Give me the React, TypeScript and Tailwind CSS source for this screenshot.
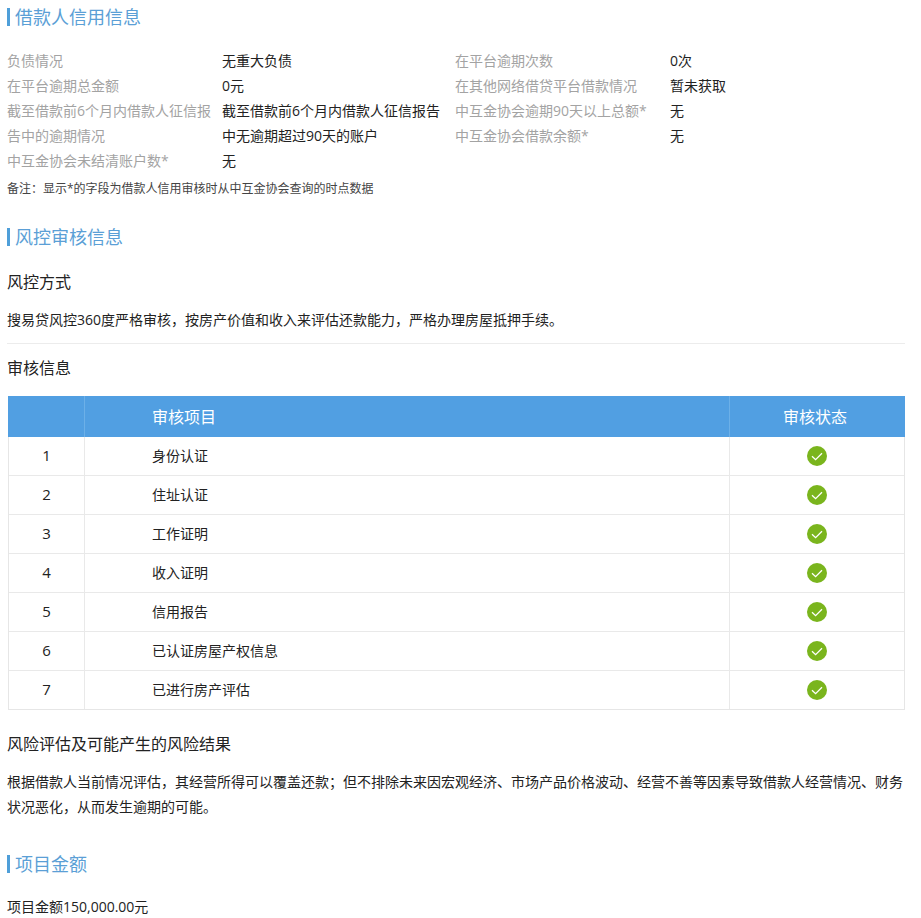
const font = { fontFamily: '"Open Sans", "Noto Sans CJK SC", sans-serif' };

const infoRows = [
  ["负债情况", "无重大负债", "在平台逾期次数", "0次"],
  ["在平台逾期总金额", "0元", "在其他网络借贷平台借款情况", "暂未获取"],
  ["截至借款前6个月内借款人征信报", "截至借款前6个月内借款人征信报告", "中互金协会逾期90天以上总额*", "无"],
  ["告中的逾期情况", "中无逾期超过90天的账户", "中互金协会借款余额*", "无"],
  ["中互金协会未结清账户数*", "无", "", ""],
];

const auditRows = ["身份认证", "住址认证", "工作证明", "收入证明", "信用报告", "已认证房屋产权信息", "已进行房产评估"];

function Title({ children }: { children: string }) {
  return (
    <h2 className="flex items-center gap-[5px] text-[18px] leading-[18px] text-[#5b9fd6]">
      <span className="h-[18px] w-[3px] bg-[#4f9fd9]" />
      {children}
    </h2>
  );
}

function CheckIcon() {
  return (
    <svg width="20" height="20" viewBox="0 0 20 20" className="block">
      <circle cx="10" cy="10" r="10" fill="#7ab51d" />
      <path d="M5 10.2l3.6 3.4L15 7.2" fill="none" stroke="#fff" strokeWidth="1.3" />
    </svg>
  );
}

export default function App() {
  return (
    <div className="h-[918px] w-[921px] overflow-hidden bg-white pl-[7px] pr-4 pt-[8px] text-[14px] text-[#222]" style={font}>
      <Title>借款人信用信息</Title>

      {/* credit info */}
      <div className="mt-[22px]">
        {infoRows.map((row) => (
          <div key={row[0]} className="grid h-[25px] grid-cols-[215px_233px_215px_1fr] items-center whitespace-nowrap leading-[25px]">
            <span className="text-[#a3a3a3]">{row[0]}</span>
            <span>{row[1]}</span>
            <span className="text-[#a3a3a3]">{row[2]}</span>
            <span>{row[3]}</span>
          </div>
        ))}
      </div>
      <p className="mt-[7px] text-[12px] leading-[18px] text-[#444]">备注：显示*的字段为借款人信用审核时从中互金协会查询的时点数据</p>

      <div className="mt-[30px]">
        <Title>风控审核信息</Title>
      </div>
      <h3 className="mt-[26px] text-[16px] leading-[20px]">风控方式</h3>
      <p className="mt-[18px] leading-[20px]">搜易贷风控360度严格审核，按房产价值和收入来评估还款能力，严格办理房屋抵押手续。</p>
      <div className="mt-[13px] h-px w-[898px] bg-[#ececec]" />
      <h3 className="mt-[14px] text-[16px] leading-[20px]">审核信息</h3>

      {/* audit table */}
      <div className="ml-px mt-[18px] w-[897px] border-x border-b border-[#e6e6e6]">
        <div className="-mx-px grid h-[41px] grid-cols-[77px_645px_1fr] items-center bg-[#519fe2] text-[16px] text-white">
          <span className="h-full border-r border-[#6cb0e8]" />
          <span className="flex h-full items-center border-r border-[#6cb0e8] pl-[67px]">审核项目</span>
          <span className="pr-[5px] text-center">审核状态</span>
        </div>
        {auditRows.map((name, i) => (
          <div key={name} className="grid h-[39px] grid-cols-[76px_645px_1fr] border-b border-[#e9e9e9] last:h-[38px] last:border-b-0">
            <span className="flex items-center justify-center border-r border-[#e9e9e9] pb-[2px] text-[15px]">{i + 1}</span>
            <span className="flex items-center border-r border-[#e9e9e9] pb-[2px] pl-[67px]">{name}</span>
            <span className="flex items-center justify-center"><CheckIcon /></span>
          </div>
        ))}
      </div>

      <h3 className="mt-[24px] text-[16px] leading-[20px]">风险评估及可能产生的风险结果</h3>
      <p className="mt-[15px] w-[900px] leading-[25px]">
        根据借款人当前情况评估，其经营所得可以覆盖还款；但不排除未来因宏观经济、市场产品价格波动、经营不善等因素导致借款人经营情况、财务状况恶化，从而发生逾期的可能。
      </p>

      <div className="mt-[36px]">
        <Title>项目金额</Title>
      </div>
      <p className="mt-[24px] leading-[20px]">项目金额150,000.00元</p>
    </div>
  );
}
